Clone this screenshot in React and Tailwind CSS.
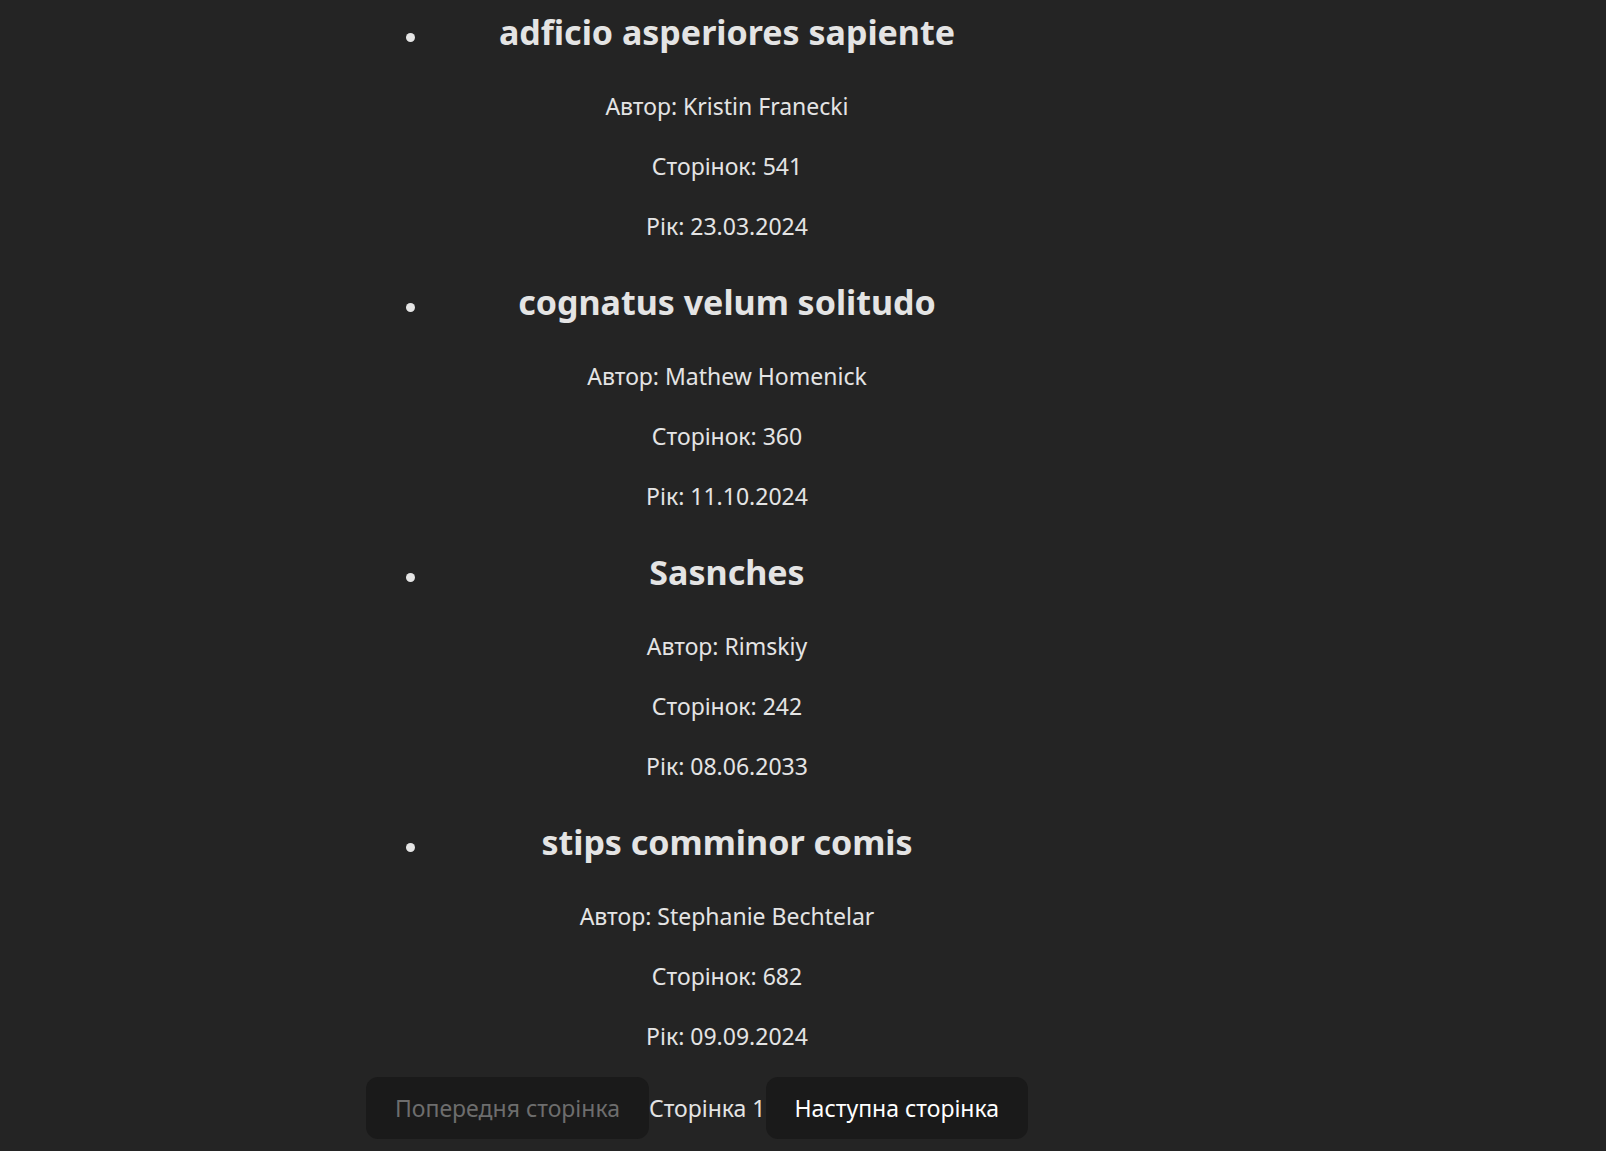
const books = [
  { title: 'adficio asperiores sapiente', author: 'Kristin Franecki', pages: 541, year: '23.03.2024' },
  { title: 'cognatus velum solitudo', author: 'Mathew Homenick', pages: 360, year: '11.10.2024' },
  { title: 'Sasnches', author: 'Rimskiy', pages: 242, year: '08.06.2033' },
  { title: 'stips comminor comis', author: 'Stephanie Bechtelar', pages: 682, year: '09.09.2024' },
];

function Book({ title, author, pages, year }) {
  return (
    <li className="flex flex-col gap-6">
      <div className="relative mb-[6px]">
        <span className="absolute top-[27px] -left-5 size-[9px] rounded-full bg-[#e4e4e4]" />
        <h2 className="text-[34px] leading-[52px] font-bold">{title}</h2>
      </div>
      <p>Автор: {author}</p>
      <p>Сторінок: {pages}</p>
      <p>Рік: {year}</p>
    </li>
  );
}

export default function App() {
  return (
    <main className="flex min-h-screen justify-center bg-[#242424] pt-[6px] pr-[212px] pb-3 font-['Noto_Sans',sans-serif] text-[23px] leading-9 text-[#e4e4e4]">
      <div>
        <ul className="mb-[23px] flex flex-col gap-8 pl-[60px] text-center">
          {books.map((book) => (
            <Book key={book.title} {...book} />
          ))}
        </ul>
        <div className="flex items-center">
          <button disabled className="rounded-xl bg-[#1a1a1a] px-[29px] py-[13px] text-[#6d6d6d]">Попередня сторінка</button>
          <span>Сторінка 1</span>
          <button className="rounded-xl bg-[#1a1a1a] px-[29px] py-[13px] text-white">Наступна сторінка</button>
        </div>
      </div>
    </main>
  );
}
